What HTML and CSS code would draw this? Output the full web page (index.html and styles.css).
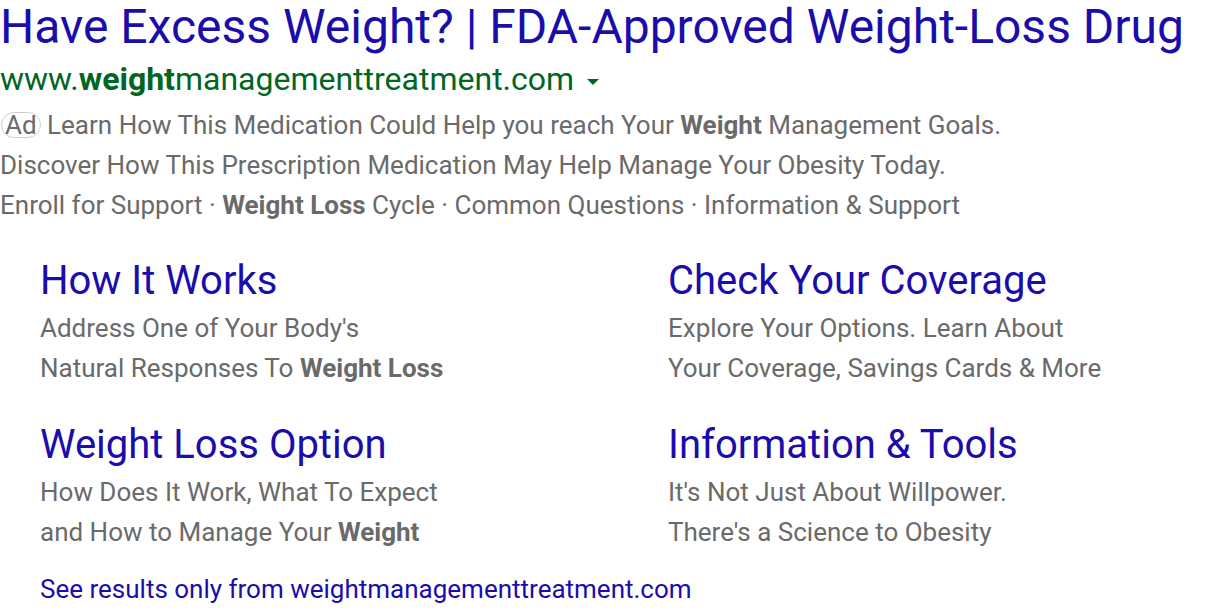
FILE: index.html
```html
<!DOCTYPE html>
<html>
<head>
<meta charset="utf-8">
<link rel="stylesheet" href="styles.css">
</head>
<body>
<div class="ad">
  <h3 class="title">Have Excess Weight? | FDA-Approved Weight-Loss Drug</h3>
  <div class="url">www.<b>weight</b>managementtreatment.com <span class="caret"></span></div>
  <div class="desc">
    <div class="line"><span class="badge">Ad</span> Learn How This Medication Could Help you reach Your <b>Weight</b> Management Goals.</div>
    <div class="line">Discover How This Prescription Medication May Help Manage Your Obesity Today.</div>
    <div class="line">Enroll for Support · <b>Weight Loss</b> Cycle · Common Questions · Information &amp; Support</div>
  </div>
  <div class="sitelinks">
    <div class="sl">
      <div class="sl-title">How It Works</div>
      <div class="sl-line">Address One of Your Body's</div>
      <div class="sl-line">Natural Responses To <b>Weight Loss</b></div>
    </div>
    <div class="sl">
      <div class="sl-title">Check Your Coverage</div>
      <div class="sl-line">Explore Your Options. Learn About</div>
      <div class="sl-line">Your Coverage, Savings Cards &amp; More</div>
    </div>
    <div class="sl">
      <div class="sl-title">Weight Loss Option</div>
      <div class="sl-line">How Does It Work, What To Expect</div>
      <div class="sl-line">and How to Manage Your <b>Weight</b></div>
    </div>
    <div class="sl">
      <div class="sl-title">Information &amp; Tools</div>
      <div class="sl-line">It's Not Just About Willpower.</div>
      <div class="sl-line">There's a Science to Obesity</div>
    </div>
  </div>
  <div class="more">See results only from weightmanagementtreatment.com</div>
</div>
</body>
</html>
```
FILE: styles.css
```css
html, body {
  margin: 0;
  padding: 0;
  background: #fff;
}
body {
  font-family: Roboto, "Liberation Sans", sans-serif;
}
.title {
  margin: 0;
  font-weight: 400;
  font-size: 48px;
  line-height: 54px;
  color: #1a0dab;
  white-space: nowrap;
}
.url {
  font-size: 32px;
  line-height: 51px;
  color: #006621;
  white-space: nowrap;
}
.url b {
  font-weight: 700;
}
.caret {
  display: inline-block;
  width: 0;
  height: 0;
  border-left: 6px solid transparent;
  border-right: 6px solid transparent;
  border-top: 6px solid #006621;
  vertical-align: middle;
  margin-left: 5px;
}
.desc {
  color: #6a6a6a;
  font-size: 26px;
  line-height: 40px;
}
.desc b, .sl-line b {
  font-weight: 700;
}
.line {
  white-space: nowrap;
}
.badge {
  display: inline-block;
  border: 1px solid #cfcfcf;
  border-radius: 13px;
  padding: 0 3px;
  line-height: 24px;
  margin-left: 1px;
}
.sitelinks {
  display: grid;
  grid-template-columns: 628px 1fr;
  padding: 28px 0 0 40px;
  row-gap: 29px;
}
.sl-title {
  font-size: 40px;
  line-height: 55px;
  color: #1a0dab;
  white-space: nowrap;
}
.sl-line {
  color: #6a6a6a;
  font-size: 26px;
  line-height: 40px;
  white-space: nowrap;
}
.more {
  padding: 17px 0 0 40px;
  font-size: 26px;
  line-height: 40px;
  color: #1a0dab;
  white-space: nowrap;
}
```
